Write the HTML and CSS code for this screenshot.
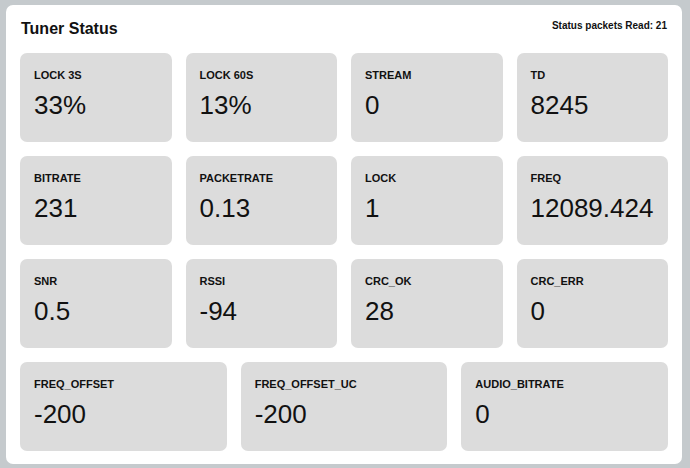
FILE: index.html
```html
<!DOCTYPE html>
<html>
<head>
<meta charset="utf-8">
<link rel="stylesheet" href="styles.css">
</head>
<body>
<div class="card">
  <div class="card-header">
    <h2 class="title">Tuner Status</h2>
    <div class="packets">Status packets Read: 21</div>
  </div>
  <div class="grid">
    <div class="tile"><div class="label">LOCK 3S</div><div class="value">33%</div></div>
    <div class="tile"><div class="label">LOCK 60S</div><div class="value">13%</div></div>
    <div class="tile"><div class="label">STREAM</div><div class="value">0</div></div>
    <div class="tile"><div class="label">TD</div><div class="value">8245</div></div>
    <div class="tile"><div class="label">BITRATE</div><div class="value">231</div></div>
    <div class="tile"><div class="label">PACKETRATE</div><div class="value">0.13</div></div>
    <div class="tile"><div class="label">LOCK</div><div class="value">1</div></div>
    <div class="tile"><div class="label">FREQ</div><div class="value">12089.424</div></div>
    <div class="tile"><div class="label">SNR</div><div class="value">0.5</div></div>
    <div class="tile"><div class="label">RSSI</div><div class="value">-94</div></div>
    <div class="tile"><div class="label">CRC_OK</div><div class="value">28</div></div>
    <div class="tile"><div class="label">CRC_ERR</div><div class="value">0</div></div>
    <div class="tile wide"><div class="label">FREQ_OFFSET</div><div class="value">-200</div></div>
    <div class="tile wide"><div class="label">FREQ_OFFSET_UC</div><div class="value">-200</div></div>
    <div class="tile wide"><div class="label">AUDIO_BITRATE</div><div class="value">0</div></div>
  </div>
</div>
</body>
</html>
```
FILE: styles.css
```css
html, body {
  margin: 0;
  padding: 0;
}
body {
  background: #c5cacd;
  padding: 5px 8px 4px 6px;
  font-family: "Liberation Sans", Arial, sans-serif;
  color: #111;
}
.card {
  background: #ffffff;
  border-radius: 7px;
  padding: 15px 14px 13px 14px;
}
.card-header {
  display: flex;
  justify-content: space-between;
  align-items: flex-start;
  margin-bottom: 15px;
}
.title {
  margin: 0 0 0 1px;
  font-size: 16px;
  font-weight: bold;
  line-height: 18px;
}
.packets {
  font-size: 10px;
  font-weight: bold;
  line-height: 12px;
  margin-right: 1px;
}
.grid {
  display: grid;
  grid-template-columns: repeat(12, 1fr);
  gap: 14px;
}
.tile {
  grid-column: span 3;
  height: 89px;
  box-sizing: border-box;
  background: #dcdcdc;
  border-radius: 7px;
  padding: 16px 14px 0 14px;
}
.tile.wide {
  grid-column: span 4;
}
.label {
  font-size: 11px;
  font-weight: bold;
  line-height: 13px;
  color: #111;
}
.value {
  margin-top: 8px;
  font-size: 26px;
  line-height: 30px;
  color: #111;
}
```
